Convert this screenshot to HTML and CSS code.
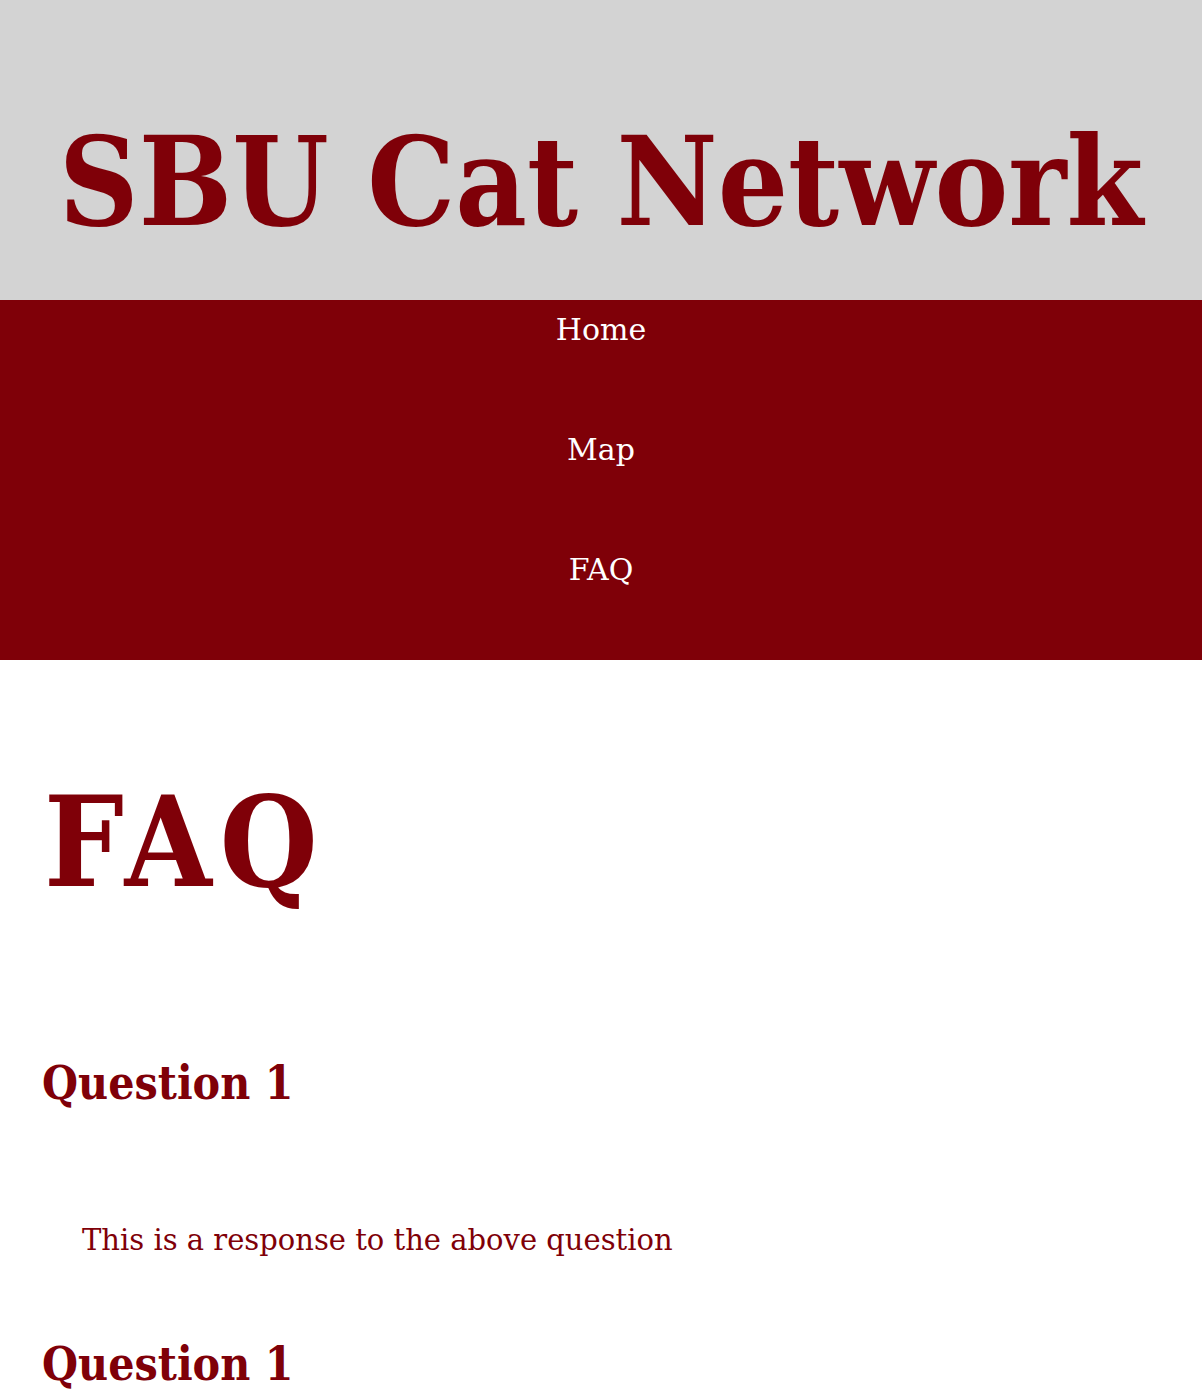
FILE: index.html
```html
<!DOCTYPE html>
<html lang="en">
<head>
<meta charset="utf-8">
<title>SBU Cat Network - FAQ</title>
<link rel="stylesheet" href="styles.css">
</head>
<body>
<header class="banner">
  <h1 class="site-title">SBU Cat Network</h1>
</header>
<nav class="main-nav">
  <ul class="nav-list">
    <li class="nav-item"><a class="nav-link" href="#">Home</a></li>
    <li class="nav-item"><a class="nav-link" href="#">Map</a></li>
    <li class="nav-item"><a class="nav-link" href="#">FAQ</a></li>
  </ul>
</nav>
<main class="content">
  <h1 class="page-title">FAQ</h1>
  <div class="faq-list">
    <section class="faq-item">
      <h2 class="question">Question 1</h2>
      <p class="answer">This is a response to the above question</p>
    </section>
    <section class="faq-item">
      <h2 class="question">Question 1</h2>
      <p class="answer">This is a response to the above question</p>
    </section>
  </div>
</main>
</body>
</html>
```
FILE: styles.css
```css
html, body {
  margin: 0;
  padding: 0;
  background: #ffffff;
}
body {
  font-family: "DejaVu Serif", "Liberation Serif", serif;
  font-stretch: condensed;
  color: #7f0008;
}
.banner {
  box-sizing: border-box;
  height: 300px;
  padding-top: 121px;
  background: #d3d3d3;
  text-align: center;
}
.site-title {
  margin: 0;
  font-size: 123px;
  line-height: 1;
  font-weight: bold;
  white-space: nowrap;
}
.main-nav {
  background: #7f0008;
}
.nav-list {
  list-style: none;
  margin: 0;
  padding: 15px 0 75px;
  display: flex;
  flex-direction: column;
  gap: 90px;
}
.nav-item {
  text-align: center;
  font-size: 30px;
  font-stretch: normal;
  line-height: 1;
}
.nav-link {
  color: #ffffff;
  text-decoration: none;
}
.content {
  padding: 0 42px;
}
.page-title {
  margin: 120px 0 0 2px;
  font-size: 125px;
  letter-spacing: 8px;
  line-height: 1;
  font-weight: bold;
}
.faq-list {
  padding-top: 155px;
}
.question {
  margin: 0;
  font-size: 46px;
  line-height: 1;
  font-weight: bold;
}
.answer {
  margin: 120px 0 86px 40px;
  font-size: 29px;
  font-stretch: normal;
  line-height: 1;
}
```
